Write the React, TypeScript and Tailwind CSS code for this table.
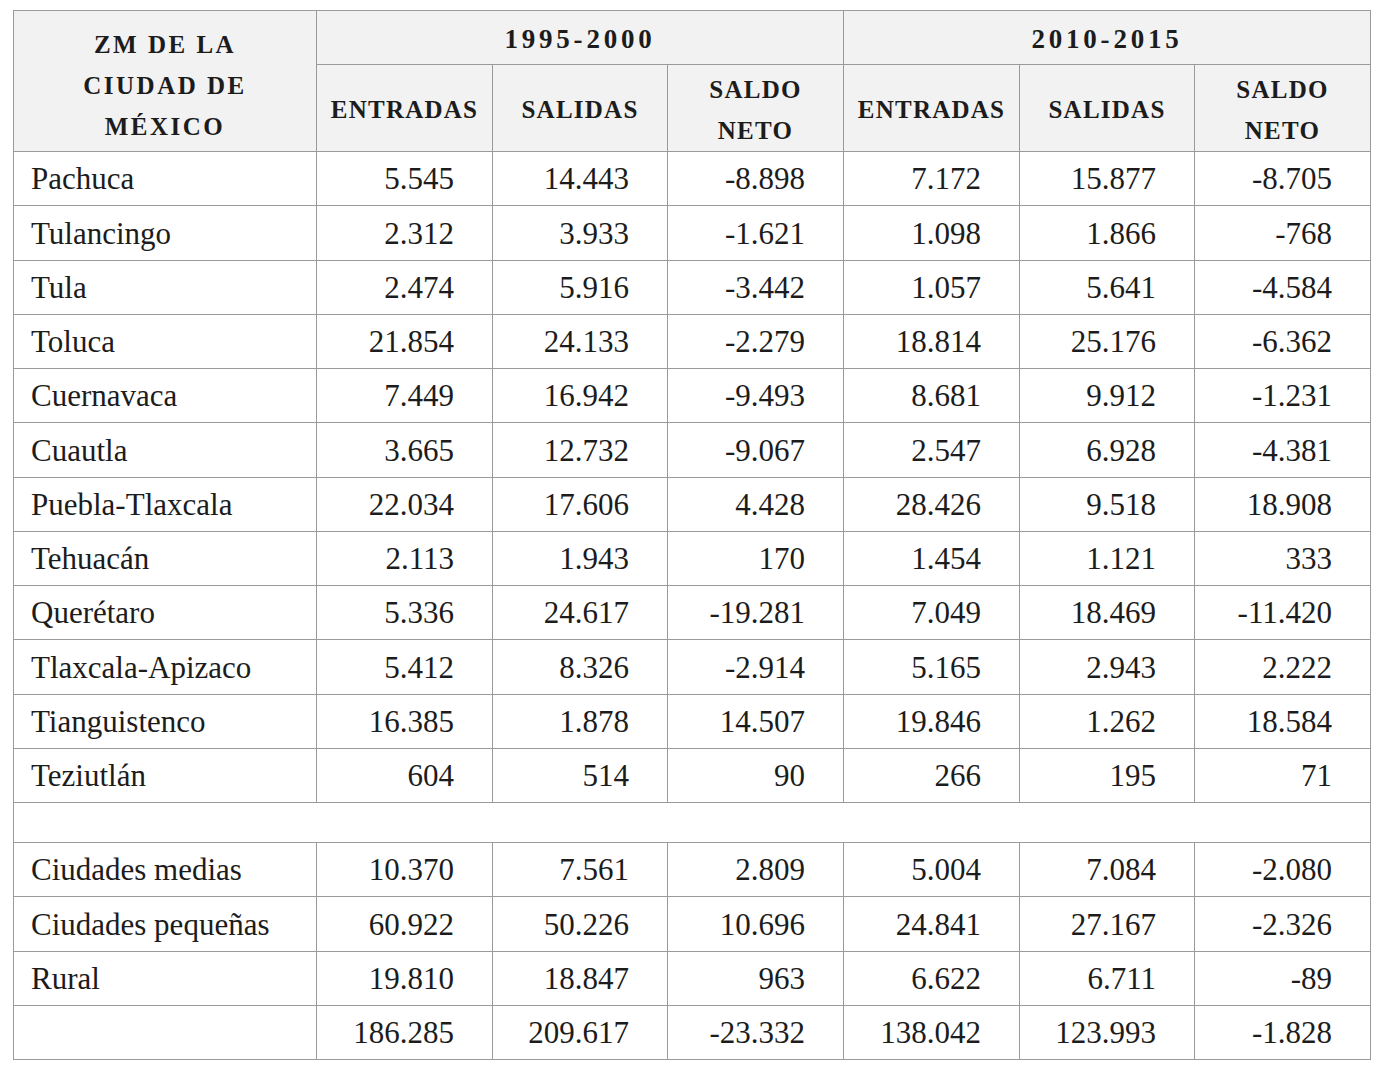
const rows: [string, string, string, string, string, string, string][] = [
  ['Pachuca', '5.545', '14.443', '-8.898', '7.172', '15.877', '-8.705'],
  ['Tulancingo', '2.312', '3.933', '-1.621', '1.098', '1.866', '-768'],
  ['Tula', '2.474', '5.916', '-3.442', '1.057', '5.641', '-4.584'],
  ['Toluca', '21.854', '24.133', '-2.279', '18.814', '25.176', '-6.362'],
  ['Cuernavaca', '7.449', '16.942', '-9.493', '8.681', '9.912', '-1.231'],
  ['Cuautla', '3.665', '12.732', '-9.067', '2.547', '6.928', '-4.381'],
  ['Puebla-Tlaxcala', '22.034', '17.606', '4.428', '28.426', '9.518', '18.908'],
  ['Tehuacán', '2.113', '1.943', '170', '1.454', '1.121', '333'],
  ['Querétaro', '5.336', '24.617', '-19.281', '7.049', '18.469', '-11.420'],
  ['Tlaxcala-Apizaco', '5.412', '8.326', '-2.914', '5.165', '2.943', '2.222'],
  ['Tianguistenco', '16.385', '1.878', '14.507', '19.846', '1.262', '18.584'],
  ['Teziutlán', '604', '514', '90', '266', '195', '71'],
];

const totals: [string, string, string, string, string, string, string][] = [
  ['Ciudades medias', '10.370', '7.561', '2.809', '5.004', '7.084', '-2.080'],
  ['Ciudades pequeñas', '60.922', '50.226', '10.696', '24.841', '27.167', '-2.326'],
  ['Rural', '19.810', '18.847', '963', '6.622', '6.711', '-89'],
  ['', '186.285', '209.617', '-23.332', '138.042', '123.993', '-1.828'],
];

function DataRow({ cells }: { cells: string[] }) {
  return (
    <tr className="h-[54.25px]">
      <td className="border border-[#9a9a9a] pl-[17px] pt-[2px] text-left">{cells[0]}</td>
      {cells.slice(1).map((c, i) => (
        <td key={i} className="border border-[#9a9a9a] pr-[38px] pt-[2px] text-right">
          {c}
        </td>
      ))}
    </tr>
  );
}

function SubHead({ children }: { children: React.ReactNode }) {
  return (
    <th className="border border-[#9a9a9a] bg-[#f2f2f2] text-[25px] font-bold tracking-[0.05em] leading-[41px] pt-[3px] align-middle">
      {children}
    </th>
  );
}

export default function App() {
  return (
    <div className="min-h-screen bg-white pl-[13px] pt-[10px] font-['Liberation_Serif',serif] text-[#1c1c1c]">
      <table className="table-fixed border-collapse w-[1358px] text-[31px]">
        <colgroup>
          <col className="w-[303px]" />
          <col className="w-[176px]" />
          <col className="w-[175px]" />
          <col className="w-[176px]" />
          <col className="w-[176px]" />
          <col className="w-[175px]" />
          <col className="w-[176px]" />
        </colgroup>
        <thead>
          <tr className="h-[54px]">
            <th
              rowSpan={2}
              className="border border-[#9a9a9a] bg-[#f2f2f2] text-[25px] font-bold tracking-[0.1em] leading-[41px] pt-[8px] align-middle"
            >
              ZM DE LA
              <br />
              CIUDAD DE
              <br />
              MÉXICO
            </th>
            <th colSpan={3} className="border border-[#9a9a9a] bg-[#f2f2f2] text-[27px] font-bold tracking-[0.14em] pt-[4px]">
              1995-2000
            </th>
            <th colSpan={3} className="border border-[#9a9a9a] bg-[#f2f2f2] text-[27px] font-bold tracking-[0.14em] pt-[4px]">
              2010-2015
            </th>
          </tr>
          <tr className="h-[87px]">
            <SubHead>ENTRADAS</SubHead>
            <SubHead>SALIDAS</SubHead>
            <SubHead>
              SALDO
              <br />
              NETO
            </SubHead>
            <SubHead>ENTRADAS</SubHead>
            <SubHead>SALIDAS</SubHead>
            <SubHead>
              SALDO
              <br />
              NETO
            </SubHead>
          </tr>
        </thead>
        <tbody>
          {rows.map((r) => (
            <DataRow key={r[0]} cells={r} />
          ))}
          <tr className="h-[40px]">
            <td colSpan={7} className="border border-[#9a9a9a]"></td>
          </tr>
          {totals.map((r, i) => (
            <DataRow key={i} cells={r} />
          ))}
        </tbody>
      </table>
    </div>
  );
}
